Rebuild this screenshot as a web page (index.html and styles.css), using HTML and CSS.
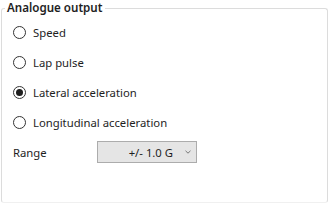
FILE: index.html
```html
<!DOCTYPE html>
<html lang="en">
<head>
  <meta charset="UTF-8">
  <title>Analogue output</title>
  <link rel="stylesheet" href="styles.css">
</head>
<body>
  <fieldset class="group">
    <legend>Analogue output</legend>
    <label class="option"><input type="radio" name="out"> Speed</label>
    <label class="option"><input type="radio" name="out"> Lap pulse</label>
    <label class="option"><input type="radio" name="out" checked> Lateral acceleration</label>
    <label class="option"><input type="radio" name="out"> Longitudinal acceleration</label>
    <div class="range-row">
      <span class="range-label">Range</span>
      <div class="combo">
        <span class="combo-value">+/- 1.0 G</span>
        <svg class="chevron" width="6" height="4" viewBox="0 0 6 4"><path d="M0.5 0.8 L3 3.2 L5.5 0.8" fill="none" stroke="#777" stroke-width="1"/></svg>
      </div>
    </div>
  </fieldset>
</body>
</html>
```

FILE: styles.css
```css
body {
  margin: 0;
  background: #fff;
  font-family: "Noto Sans", "Open Sans", sans-serif;
  font-size: 11.3px;
  color: #1e1e1e;
}
.group {
  margin: 0 2px 0 1px;
  height: 203px;
  box-sizing: border-box;
  border: 1px solid #dcdcdc;
  border-bottom-color: #f0f0f0;
  border-radius: 3px;
  padding: 0;
  display: flex;
  flex-direction: column;
}
.group legend {
  font-weight: 600;
  font-size: 11.6px;
  padding: 0 3px 0 2px;
  margin-left: 3px;
  line-height: 16px;
}
.option {
  display: flex;
  align-items: center;
  height: 30px;
  padding-left: 11px;
}
.option:first-of-type {
  margin-top: 1px;
}
.option input {
  appearance: none;
  margin: 0 7px 0 0;
  width: 13px;
  height: 13px;
  border: 1px solid #333;
  border-radius: 50%;
  background: #fff;
  display: grid;
  place-items: center;
}
.option input:checked::after {
  content: "";
  width: 7px;
  height: 7px;
  border-radius: 50%;
  background: #1e1e1e;
}
.range-row {
  display: flex;
  align-items: center;
  height: 30px;
  padding-left: 11px;
}
.range-label {
  width: 84px;
}
.combo {
  width: 93px;
  height: 20px;
  background: #e5e5e5;
  border: 1px solid #acacac;
  display: flex;
  align-items: center;
  justify-content: flex-end;
  padding-right: 5px;
  box-sizing: content-box;
}
.combo-value {
  margin-right: 12px;
}
```
